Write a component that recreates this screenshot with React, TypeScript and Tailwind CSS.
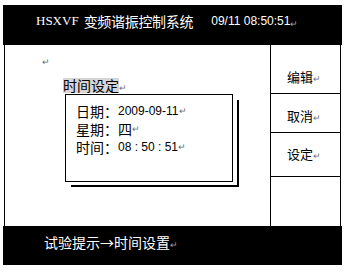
import React from 'react';

const cjk = { fontFamily: '"Noto Sans CJK SC", "Liberation Sans", sans-serif' };
const sans = { fontFamily: '"Liberation Sans", "Noto Sans CJK SC", sans-serif' };
const serif = { fontFamily: '"Liberation Serif", "Noto Sans CJK SC", serif' };

// Word 段落标记
function Mark({ light }: { light?: boolean }) {
  return (
    <span className={`text-[9px] leading-none ${light ? 'text-gray-400' : 'text-gray-500'}`} style={sans}>
      ↵
    </span>
  );
}

function SideButton({ label, className }: { label: string; className: string }) {
  return (
    <div className={`pl-[16px] ${className}`}>
      <span className="text-[13px] leading-[16px] text-black" style={cjk}>{label}</span>
      <Mark />
    </div>
  );
}

export default function App() {
  return (
    <div className="w-[347px] h-[272px] bg-white pt-[5px] pl-[3px] overflow-hidden">
      <div className="w-[339px]">
        {/* 标题栏 */}
        <div className="h-[40px] bg-black flex items-start pt-[6px] pl-[33px] text-white">
          <span className="text-[13px] leading-[20px]" style={serif}>HSXVF</span>
          <span className="text-[14px] leading-[20px] ml-[5px] tracking-[-0.3px]" style={cjk}>变频谐振控制系统</span>
          <span className="text-[12px] leading-[20px] ml-[18px]" style={sans}>09/11 08:50:51</span>
          <span className="leading-[20px]"><Mark light /></span>
        </div>

        {/* 主体 */}
        <div className="mx-[1px] h-[181px] border-x border-black flex">
          <div className="flex-1">
            <div className="pl-[37px] pt-[13px] h-[33px] flex items-start">
              <Mark />
            </div>
            <div className="pl-[58px] flex items-end h-[15px]">
              <span className="bg-[#d6d6d6] text-[14px] leading-[15px] text-black h-[15px]" style={cjk}>时间设定</span>
              <Mark />
            </div>
            <div className="relative ml-[60px] mt-[1px] w-[168px] h-[88px]">
              <div className="absolute left-[6px] top-[6px] w-[168px] h-[87px] border-r-2 border-b-2 border-black" />
              <div className="relative w-[168px] h-[88px] border border-black bg-white pt-[7px] pl-[10px]">
                <div className="h-[18px] flex items-center">
                  <span className="text-[14px] leading-[18px] text-black" style={cjk}>日期：</span>
                  <span className="text-[12px] leading-[18px] text-black" style={sans}>2009-09-11</span>
                  <Mark />
                </div>
                <div className="h-[18px] flex items-center">
                  <span className="text-[14px] leading-[18px] text-black" style={cjk}>星期：四</span>
                  <Mark />
                </div>
                <div className="h-[18px] flex items-center">
                  <span className="text-[14px] leading-[18px] text-black" style={cjk}>时间：</span>
                  <span className="text-[12px] leading-[18px] text-black whitespace-pre" style={sans}>08 : 50 : 51</span>
                  <Mark />
                </div>
              </div>
            </div>
          </div>

          {/* 右侧按钮 */}
          <div className="w-[70px] border-l border-black flex flex-col">
            <SideButton label="编辑" className="h-[49px] pt-[19px] border-b border-black" />
            <SideButton label="取消" className="h-[39px] pt-[9px] border-b border-black" />
            <SideButton label="设定" className="h-[44px] pt-[8px] border-b border-black" />
            <div className="flex-1" />
          </div>
        </div>

        {/* 提示栏 */}
        <div className="h-[39px] bg-black flex items-start pt-[6px] pl-[41px] text-white">
          <span className="text-[14px] leading-[20px]" style={cjk}>试验提示→时间设置</span>
          <span className="leading-[20px]"><Mark light /></span>
        </div>
      </div>
    </div>
  );
}
